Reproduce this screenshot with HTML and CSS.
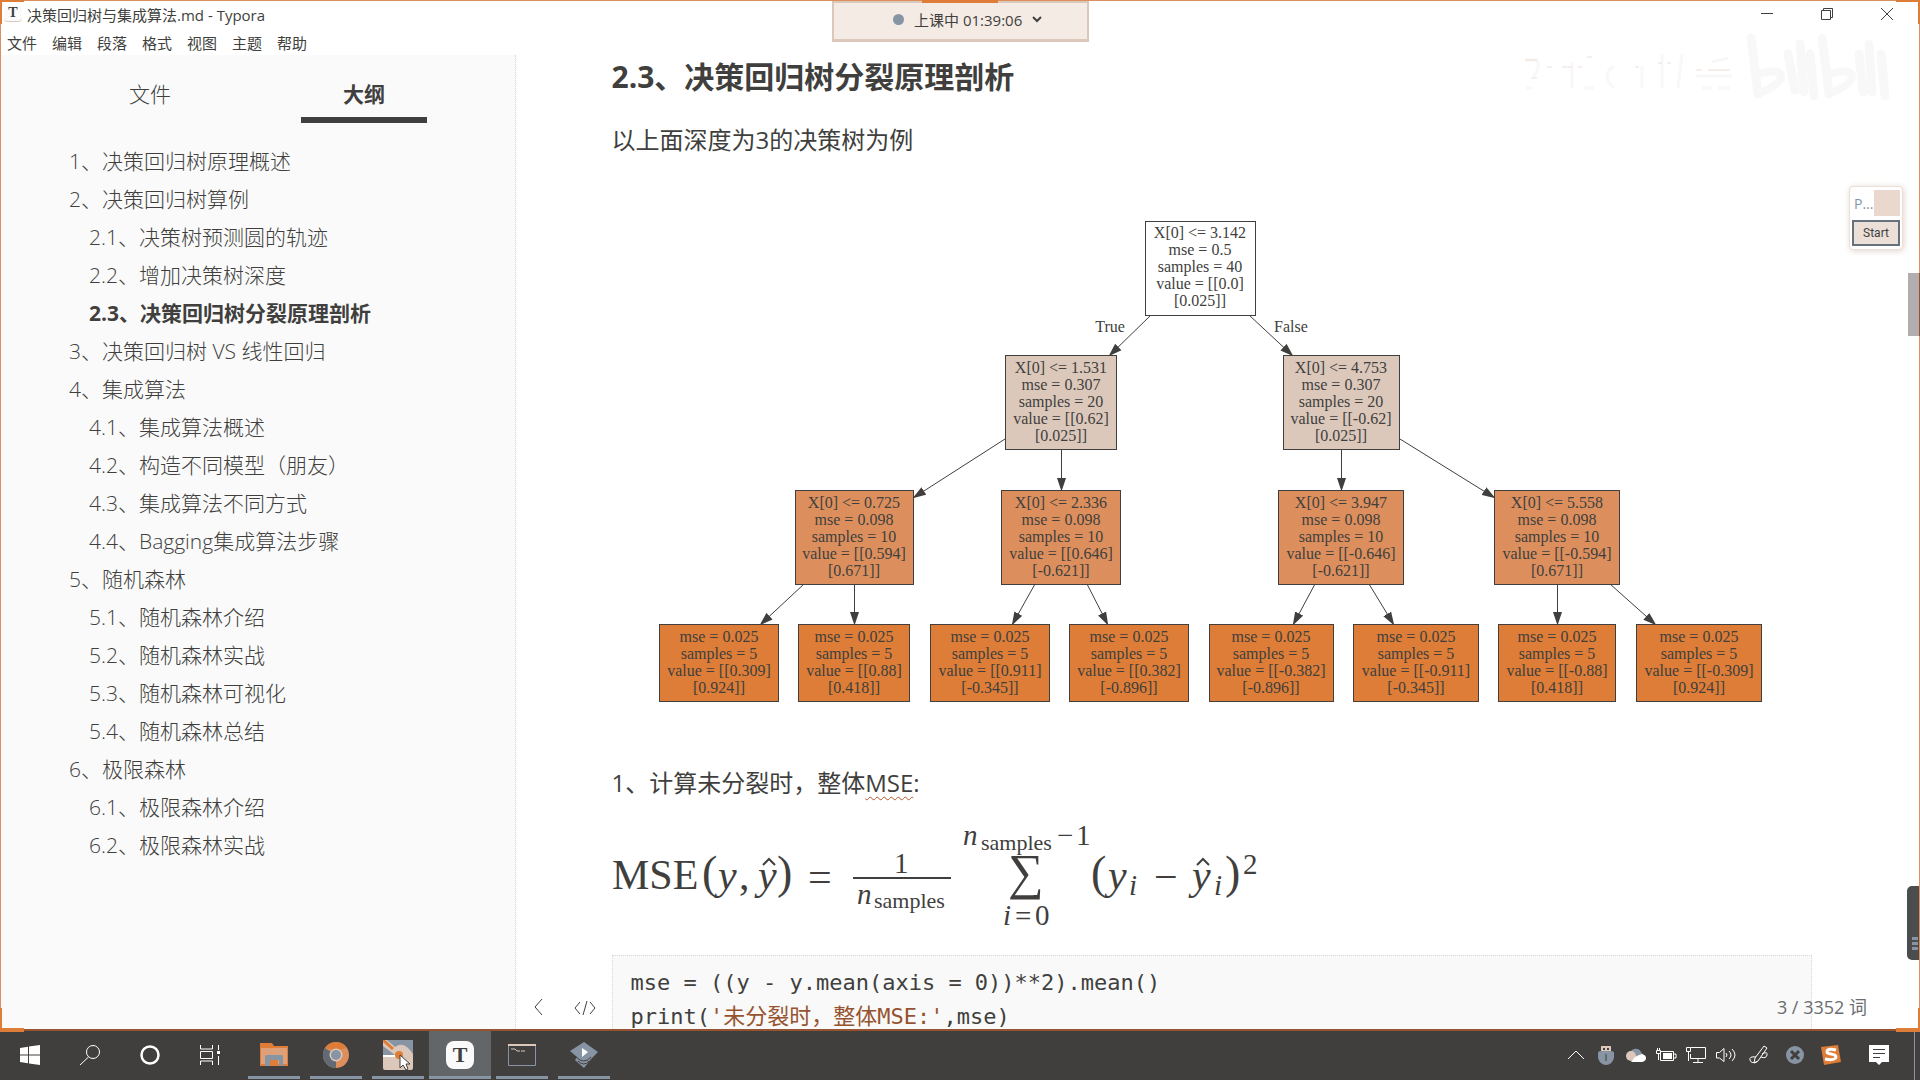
FILE: index.html
```html
<!DOCTYPE html>
<html lang="zh-CN">
<head>
<meta charset="utf-8">
<title>决策回归树与集成算法.md - Typora</title>
<link rel="stylesheet" href="styles.css">
</head>
<body>
<div class="window">
  <header class="titlebar">
    <span class="app-icon">T</span>
    <span class="title">决策回归树与集成算法.md - Typora</span>
    <div class="window-controls">
      <button type="button" aria-label="最小化"><svg width="14" height="14"><path d="M1 6.500h12" /></svg></button>
      <button type="button" aria-label="还原"><svg width="14" height="14"><path d="M1.500 3.500h9v9h-9zM3.500 3.500v-2h9v9h-2" /></svg></button>
      <button type="button" aria-label="关闭"><svg width="14" height="14"><path d="M1 1l12 12M13 1L1 13" /></svg></button>
    </div>
  </header>
  <nav class="menubar" aria-label="菜单">
    <button type="button">文件</button><button type="button">编辑</button><button type="button">段落</button><button type="button">格式</button><button type="button">视图</button><button type="button">主题</button><button type="button">帮助</button>
  </nav>
  <div class="workspace">
    <aside class="sidebar">
      <div class="tabs">
        <button type="button" class="tab">文件</button>
        <button type="button" class="tab active">大纲</button>
      </div>
      <nav class="outline" aria-label="大纲">
        <a href="#s1">1、决策回归树原理概述</a>
        <a href="#s2">2、决策回归树算例</a>
        <a href="#s21" class="sub">2.1、决策树预测圆的轨迹</a>
        <a href="#s22" class="sub">2.2、增加决策树深度</a>
        <a href="#s23" class="sub current">2.3、决策回归树分裂原理剖析</a>
        <a href="#s3">3、决策回归树 VS 线性回归</a>
        <a href="#s4">4、集成算法</a>
        <a href="#s41" class="sub">4.1、集成算法概述</a>
        <a href="#s42" class="sub">4.2、构造不同模型（朋友）</a>
        <a href="#s43" class="sub">4.3、集成算法不同方式</a>
        <a href="#s44" class="sub">4.4、Bagging集成算法步骤</a>
        <a href="#s5">5、随机森林</a>
        <a href="#s51" class="sub">5.1、随机森林介绍</a>
        <a href="#s52" class="sub">5.2、随机森林实战</a>
        <a href="#s53" class="sub">5.3、随机森林可视化</a>
        <a href="#s54" class="sub">5.4、随机森林总结</a>
        <a href="#s6">6、极限森林</a>
        <a href="#s61" class="sub">6.1、极限森林介绍</a>
        <a href="#s62" class="sub">6.2、极限森林实战</a>
      </nav>
    </aside>
    <main class="editor">
      <article class="document">
        <h3 id="s23">2.3、决策回归树分裂原理剖析</h3>
        <p>以上面深度为3的决策树为例</p>
        <svg class="tree" viewBox="612 209 1200 507" role="img" aria-label="决策树">
          <defs>
            <marker id="arrow" markerUnits="userSpaceOnUse" markerWidth="14" markerHeight="10" refX="13" refY="5" orient="auto"><path d="M0 0.500L13.500 5L0 9.500z" fill="#403f3d" /></marker>
          </defs>
          <g class="edges">
            <path d="M1151 315L1109 356" /><path d="M1249 315L1293 356" />
            <path d="M1005 439L913 498" /><path d="M1061.500 449V491" />
            <path d="M1341.500 449V491" /><path d="M1400 439L1495 498" />
            <path d="M804 584L760 625" /><path d="M854.500 584V625" />
            <path d="M1035 584L1012 625" /><path d="M1087 584L1108 625" />
            <path d="M1315 584L1293 625" /><path d="M1369 584L1394 625" />
            <path d="M1557.500 584V625" /><path d="M1610 584L1656 625" />
          </g>
          <g class="depth0">
            <rect x="1145.500" y="221.500" width="110" height="94" />
            <text y="238"><tspan x="1200">X[0] &lt;= 3.142</tspan><tspan x="1200" dy="17">mse = 0.5</tspan><tspan x="1200" dy="17">samples = 40</tspan><tspan x="1200" dy="17">value = [[0.0]</tspan><tspan x="1200" dy="17">[0.025]]</tspan></text>
            <text x="1110" y="332">True</text>
            <text x="1291" y="332">False</text>
          </g>
          <g class="depth1">
            <rect x="1005.500" y="355.500" width="111" height="94" />
            <text y="373"><tspan x="1061">X[0] &lt;= 1.531</tspan><tspan x="1061" dy="17">mse = 0.307</tspan><tspan x="1061" dy="17">samples = 20</tspan><tspan x="1061" dy="17">value = [[0.62]</tspan><tspan x="1061" dy="17">[0.025]]</tspan></text>
            <rect x="1283.500" y="355.500" width="116" height="94" />
            <text y="373"><tspan x="1341">X[0] &lt;= 4.753</tspan><tspan x="1341" dy="17">mse = 0.307</tspan><tspan x="1341" dy="17">samples = 20</tspan><tspan x="1341" dy="17">value = [[-0.62]</tspan><tspan x="1341" dy="17">[0.025]]</tspan></text>
          </g>
          <g class="depth2">
            <rect x="795.500" y="490.500" width="118" height="94" />
            <text y="508"><tspan x="854">X[0] &lt;= 0.725</tspan><tspan x="854" dy="17">mse = 0.098</tspan><tspan x="854" dy="17">samples = 10</tspan><tspan x="854" dy="17">value = [[0.594]</tspan><tspan x="854" dy="17">[0.671]]</tspan></text>
            <rect x="1001.500" y="490.500" width="119" height="94" />
            <text y="508"><tspan x="1061">X[0] &lt;= 2.336</tspan><tspan x="1061" dy="17">mse = 0.098</tspan><tspan x="1061" dy="17">samples = 10</tspan><tspan x="1061" dy="17">value = [[0.646]</tspan><tspan x="1061" dy="17">[-0.621]]</tspan></text>
            <rect x="1278.500" y="490.500" width="125" height="94" />
            <text y="508"><tspan x="1341">X[0] &lt;= 3.947</tspan><tspan x="1341" dy="17">mse = 0.098</tspan><tspan x="1341" dy="17">samples = 10</tspan><tspan x="1341" dy="17">value = [[-0.646]</tspan><tspan x="1341" dy="17">[-0.621]]</tspan></text>
            <rect x="1494.500" y="490.500" width="125" height="94" />
            <text y="508"><tspan x="1557">X[0] &lt;= 5.558</tspan><tspan x="1557" dy="17">mse = 0.098</tspan><tspan x="1557" dy="17">samples = 10</tspan><tspan x="1557" dy="17">value = [[-0.594]</tspan><tspan x="1557" dy="17">[0.671]]</tspan></text>
          </g>
          <g class="depth3">
            <rect x="659.500" y="624.500" width="119" height="77" />
            <text y="642"><tspan x="719">mse = 0.025</tspan><tspan x="719" dy="17">samples = 5</tspan><tspan x="719" dy="17">value = [[0.309]</tspan><tspan x="719" dy="17">[0.924]]</tspan></text>
            <rect x="798.500" y="624.500" width="111" height="77" />
            <text y="642"><tspan x="854">mse = 0.025</tspan><tspan x="854" dy="17">samples = 5</tspan><tspan x="854" dy="17">value = [[0.88]</tspan><tspan x="854" dy="17">[0.418]]</tspan></text>
            <rect x="930.500" y="624.500" width="119" height="77" />
            <text y="642"><tspan x="990">mse = 0.025</tspan><tspan x="990" dy="17">samples = 5</tspan><tspan x="990" dy="17">value = [[0.911]</tspan><tspan x="990" dy="17">[-0.345]]</tspan></text>
            <rect x="1069.500" y="624.500" width="119" height="77" />
            <text y="642"><tspan x="1129">mse = 0.025</tspan><tspan x="1129" dy="17">samples = 5</tspan><tspan x="1129" dy="17">value = [[0.382]</tspan><tspan x="1129" dy="17">[-0.896]]</tspan></text>
            <rect x="1209.500" y="624.500" width="124" height="77" />
            <text y="642"><tspan x="1271">mse = 0.025</tspan><tspan x="1271" dy="17">samples = 5</tspan><tspan x="1271" dy="17">value = [[-0.382]</tspan><tspan x="1271" dy="17">[-0.896]]</tspan></text>
            <rect x="1353.500" y="624.500" width="125" height="77" />
            <text y="642"><tspan x="1416">mse = 0.025</tspan><tspan x="1416" dy="17">samples = 5</tspan><tspan x="1416" dy="17">value = [[-0.911]</tspan><tspan x="1416" dy="17">[-0.345]]</tspan></text>
            <rect x="1498.500" y="624.500" width="117" height="77" />
            <text y="642"><tspan x="1557">mse = 0.025</tspan><tspan x="1557" dy="17">samples = 5</tspan><tspan x="1557" dy="17">value = [[-0.88]</tspan><tspan x="1557" dy="17">[0.418]]</tspan></text>
            <rect x="1636.500" y="624.500" width="125" height="77" />
            <text y="642"><tspan x="1699">mse = 0.025</tspan><tspan x="1699" dy="17">samples = 5</tspan><tspan x="1699" dy="17">value = [[-0.309]</tspan><tspan x="1699" dy="17">[0.924]]</tspan></text>
          </g>
        </svg>
        <p>1、计算未分裂时，整体<span class="misspelt">MSE</span>:</p>
        <svg class="formula" viewBox="612 812 1200 128" role="img" aria-label="均方误差公式">
          <g class="base">
            <text x="612" y="889">MSE</text>
            <text x="718" y="889" class="var">y</text><text x="739" y="889">,</text>
            <text x="758" y="889" class="var">y</text>
            <text x="808" y="891">=</text>
            <text x="1108" y="889" class="var">y</text>
            <text x="1154" y="891">−</text>
            <text x="1192" y="889" class="var">y</text>
          </g>
          <g class="paren">
            <text x="702" y="888">(</text><text x="777" y="888">)</text>
            <text x="1091" y="888">(</text><text x="1225" y="888">)</text>
          </g>
          <g class="script">
            <text x="894" y="873">1</text>
            <text x="857" y="904" class="var">n</text>
            <text x="963" y="845" class="var">n</text>
            <text x="1057" y="845">−</text><text x="1076" y="845">1</text>
            <text x="1003" y="925" class="var">i</text><text x="1015" y="926">=</text><text x="1035" y="925">0</text>
            <text x="1129" y="895" class="var">i</text><text x="1214" y="895" class="var">i</text>
            <text x="1243" y="874">2</text>
          </g>
          <g class="subscript">
            <text x="874" y="908">samples</text>
            <text x="981" y="850">samples</text>
          </g>
          <text x="1008" y="889" class="sum">∑</text>
          <path d="M853 878h98" class="bar" />
          <path d="M763 865l6-6 6 6M1197 865l6-6 6 6" class="hat" />
        </svg>
        <pre class="code"><code>mse = ((y - y.mean(axis = 0))**2).mean()
print(<span class="str">'未分裂时，整体MSE:'</span>,mse)</code></pre>
      </article>
      <footer class="statusbar">
        <button type="button" aria-label="收起侧栏"><svg width="12" height="18"><path d="M10 1L3 9l7 8" /></svg></button>
        <button type="button" aria-label="源代码模式"><svg width="22" height="18"><path d="M6 4L1 10l5 6M16 4l5 6-5 6M13 3l-4 14" /></svg></button>
        <span class="count">3 / 3352 词</span>
      </footer>
    </main>
  </div>

  <svg class="watermark" width="380" height="80" aria-hidden="true">
    <path class="wm-text" d="M3 28h12q4 8-4 17M4 56h6M50 30v26M62 56h10M92 34q-14 10 0 22M120 34v22M140 22v34M160 22l-4 34M174 44h36M180 56h10M196 56h12M190 30l16-4" />
    <path class="wm-line" d="M3 28h12M9 46h6M25 35h5M40 35h10M56 35h4M65 25h5M113 35h4M136 31h4M145 31h4M174 38h6M186 38h22" />
    <path class="wm-logo" d="M229 6l7 56M266 22l7 36M278 12l4 48M288 22l4 42M300 6l7 56M337 22l4 38M347 12l3 48M359 22l4 42" />
    <path class="wm-ring" d="M236 42q22-6 23 2t-23 18M307 42q22-6 23 2t-23 18" />
  </svg>
  <button type="button" class="class-timer"><span class="dot"></span><span>上课中 01:39:06</span><svg width="10" height="8"><path d="M1 2l4 4 4-4" /></svg></button>
  <section class="mini-panel">
    <div class="mini-head"><span>P...</span><i></i></div>
    <button type="button">Start</button>
  </section>
  <div class="scroll-thumb"></div>
  <div class="drag-handle"><i></i><i></i><i></i></div>
  <i class="corner tl"></i><i class="corner tr"></i><i class="corner bl"></i><i class="corner br"></i>
</div>

<footer class="taskbar">
  <div class="system">
    <button type="button" aria-label="开始"><svg width="20" height="20" fill="#fff"><path d="M0 3l8-1.200V9.500H0zM9 1.600L20 0v9.500H9zM0 10.500h8v7.700L0 17zM9 10.500h11V20L9 18.400z" /></svg></button>
    <button type="button" aria-label="搜索"><svg width="22" height="22" class="line"><circle cx="14" cy="8" r="6.500" /><path d="M9.500 13L1 21" /></svg></button>
    <button type="button" aria-label="Cortana"><svg width="22" height="22" class="line"><circle cx="11" cy="11" r="8.500" stroke-width="2.500" /></svg></button>
    <button type="button" aria-label="任务视图"><svg width="22" height="20" class="line"><path d="M1.500 0v4h12V0M1.500 20v-4h12v4M1.500 6.500h12v7h-12zM19.500 0v5M19.500 11v9" /><path d="M18 6h3v3h-3z" fill="#fff" stroke="none" /></svg></button>
  </div>
  <div class="apps">
    <button type="button" class="running" aria-label="文件资源管理器"><svg width="28" height="24"><path d="M0 0h12l2 3h14v20H0z" fill="#dd7d37" /><path d="M1 5h26v16H1z" fill="#dda078" /><path d="M5 23v-9q0-2 2-2h14q2 0 2 2v9h-4v-6h-9v6z" fill="#8794a3" /><path d="M10 17h8v5h-8z" fill="#dd7d37" /></svg></button>
    <button type="button" class="running" aria-label="Chrome"><svg width="28" height="28"><circle cx="14" cy="14" r="13" fill="#dc8f5d" /><path d="M14 14L3 7A13 13 0 0 0 14 27z" fill="#626b75" /><path d="M3 7A13 13 0 0 1 25 7L14 9z" fill="#dd7d37" /><circle cx="14" cy="14" r="6.500" fill="#dcc8bb" /><circle cx="14" cy="14" r="5" fill="#8794a3" /></svg></button>
    <button type="button" class="running" aria-label="画图"><svg width="30" height="30"><rect width="30" height="30" rx="2" fill="#dcc8bb" /><path d="M4 0h26v14q-9-14-18-7zM0 6l12 9H0z" fill="#8794a3" /><path d="M0 15h14v2H0z" fill="#fff" /><path d="M0 0l10 9" stroke="#dd7d37" stroke-width="3" /><circle cx="16" cy="15" r="4" fill="#dd7d37" /><path d="M17 15v13l3-3 3 5 2-1-2-5h4z" fill="#fff" stroke="#403f3d" /></svg></button>
    <button type="button" class="running focused" aria-label="Typora"><span class="typora">T</span></button>
    <button type="button" class="running" aria-label="命令提示符"><svg width="28" height="22"><path d="M.5.5h27v21H.5z" fill="#403f3d" stroke="#8794a3" /><path d="M0 1h28" stroke="#dcc8bb" stroke-width="2" /><path d="M3 5h4l2 2h3M13 7h4" stroke="#dcc8bb" fill="none" /></svg></button>
    <button type="button" class="running" aria-label="虚拟机"><svg width="28" height="26"><path d="M14 0l14 10-7 7-7 9-9-8 2-3-7-6z" fill="#8794a3" /><path d="M6 15q8 8 15 0M8 19q6 6 11 0" stroke="#403f3d" fill="none" /><path d="M12 6l6 4-6 5z" fill="#fff" /></svg></button>
  </div>
  <div class="tray">
    <button type="button" aria-label="显示隐藏的图标"><svg width="18" height="12" class="line"><path d="M1 10l8-8 8 8" /></svg></button>
    <button type="button" aria-label="USB"><svg width="16" height="20"><path d="M3 1h10v6H3z" fill="#dcc8bb" /><path d="M5 3h2v2H5zM9 3h2v2H9z" fill="#403f3d" /><path d="M0 8q0-2 3-2h10q3 0 3 2v5q-2 7-8 7t-8-7z" fill="#8794a3" /><path d="M8 9v7" stroke="#403f3d" /></svg></button>
    <button type="button" aria-label="OneDrive"><svg width="20" height="14"><path d="M4 5a6 6 0 0 1 11-1l3 4-10 4z" fill="#8794a3" /><circle cx="5" cy="8" r="5" fill="#dcc8bb" /><path d="M5 14l4-5 4-2 3-1q4 1 4 4t-4 4z" fill="#fff" /></svg></button>
    <button type="button" aria-label="电源"><svg width="22" height="16" class="line"><path d="M5.500 4.500h13v9h-13zM19 7h2v4h-2M1.500 3.500h4v3h-4zM2.500 1v2M4.500 1v2M3.500 7v6" /><path d="M8 6h9v6H8z" fill="#fff" stroke="none" /></svg></button>
    <button type="button" aria-label="网络"><svg width="20" height="18" class="line"><path d="M5 1.500h14.500v11H4.500V8M.5 1.500h4v4h-4zM2.500 6v9M12 13v3M7 16.500h10" /></svg></button>
    <button type="button" aria-label="音量"><svg width="22" height="16" class="line"><path d="M1.500 5.500h3L9 1.500v13L4.500 11h-3z" /><path d="M11 6q2 2 0 4M14 4q4 4 0 8M17 2q6 6 0 12" /></svg></button>
    <button type="button" class="wide" aria-label="手写笔"><svg width="22" height="20" class="line"><path d="M16 1l3 2-9 13-4 2 1-5zM8 12q-7-1-6 3t7 2M14 9q6-3 5 1t-6 2" /></svg></button>
    <button type="button" class="wide" aria-label="已断开"><svg width="18" height="18"><circle cx="9" cy="9" r="9" fill="#8794a3" /><path d="M5 5l8 8M13 5l-8 8" stroke="#403f3d" stroke-width="3" /></svg></button>
    <button type="button" class="wide" aria-label="搜狗输入法"><svg width="20" height="20"><path d="M0 2l17-2 3 17-17 3z" fill="#dd7d37" /><path d="M15 5q-9-2-9 2c0 3 9 1 9 5q-1 4-11 2" stroke="#fff" stroke-width="3" fill="none" /></svg></button>
    <button type="button" class="notice" aria-label="通知"><svg width="20" height="20"><path d="M0 0h20v17h-7l-3 3-3-3H0z" fill="#fff" /><path d="M4 4.500h12M4 8.500h12M4 12.500h7" stroke="#403f3d" /></svg></button>
  </div>
</footer>
</body>
</html>
```
FILE: styles.css
```css
* { box-sizing: border-box; }

body {
  margin: 0;
  height: 100vh;
  display: flex;
  flex-direction: column;
  overflow: hidden;
  font-family: "Open Sans", "Noto Sans CJK SC", sans-serif;
  color: #403f3d;
  background: #fff;
}

button {
  border: 0;
  padding: 0;
  background: none;
  color: inherit;
  font: inherit;
}

svg { display: block; }

/* Application window */
.window {
  position: relative;
  flex: 1;
  min-height: 0;
  display: flex;
  flex-direction: column;
  border: 1px solid #dc8f5d;
  border-bottom: 2px solid #96532f;
}

.titlebar {
  display: flex;
  align-items: center;
  height: 30px;
  padding: 0 0 4px 3px;
  font-size: 15px;
}

.app-icon {
  width: 18px;
  height: 16px;
  margin-right: 5px;
  border-bottom: 1px solid #dcc8bb;
  border-radius: 4px;
  background: #fafafa;
  font: bold 14px/14px "Liberation Serif", serif;
  text-align: center;
}

.window-controls {
  display: flex;
  margin-left: auto;
  padding-right: 2px;
}

.window-controls button {
  width: 60px;
  display: flex;
  justify-content: center;
}

.window-controls path,
.statusbar path,
.class-timer path {
  fill: none;
  stroke: #403f3d;
}

.menubar {
  display: flex;
  gap: 15px;
  height: 24px;
  padding-left: 6px;
  font-size: 15px;
  line-height: 24px;
}

.workspace {
  flex: 1;
  min-height: 0;
  display: grid;
  grid-template-columns: 515px 1fr;
}

/* Outline */
.sidebar {
  background: #fafafa;
  border-right: 1px dotted #dcd6d2;
  font-size: 21px;
  overflow: hidden;
}

.tabs {
  display: flex;
  justify-content: center;
  gap: 88px;
  padding: 10px 2px 0 0;
}

.tab {
  width: 126px;
  height: 58px;
  padding-top: 3px;
  border-bottom: 6px solid transparent;
  font-weight: 300;
}

.tab.active {
  border-color: #403f3d;
  font-weight: 700;
}

.outline {
  display: flex;
  flex-direction: column;
  padding: 19px 0 0 68px;
  line-height: 38px;
  font-weight: 300;
}

.outline a {
  color: inherit;
  text-decoration: none;
}

.outline .sub { padding-left: 20px; }
.outline .current { font-weight: 700; }

/* Document */
.editor {
  position: relative;
  overflow: hidden;
  padding-right: 12px;
}

.document {
  max-width: 1200px;
  margin: 0 auto;
}

h3 {
  margin: 0 0 21px;
  font-size: 30px;
  line-height: 44px;
}

p {
  margin: 0;
  font-size: 24px;
  line-height: 40px;
}

.misspelt {
  text-decoration: underline wavy #b5562a 1px;
  text-underline-offset: 4px;
}

.tree {
  width: 100%;
  margin: 49px 0 47px;
}

.tree text {
  font: 16px "Liberation Serif", serif;
  text-anchor: middle;
  fill: #403f3d;
}

.tree rect { stroke: #403f3d; }
.edges path {
  stroke: #403f3d;
  fill: none;
  marker-end: url(#arrow);
}
.depth0 rect { fill: #fff; }
.depth1 rect { fill: #dcc8bb; }
.depth2 rect { fill: #dc8f5d; }
.depth3 rect { fill: #dd7d37; }

.formula {
  width: 100%;
  margin-top: 9px;
  fill: #403f3d;
  font-family: "Liberation Serif", serif;
}

.base { font-size: 42px; }
.sum { font-size: 50px; }
.paren { font-size: 46px; }
.script { font-size: 29px; }
.subscript { font-size: 22px; }
.var { font-style: italic; }
.bar { stroke: #403f3d; stroke-width: 2; }
.hat { stroke: #403f3d; stroke-width: 2; fill: none; }

.code {
  margin: 15px 0 0;
  padding: 10px 18px;
  border: 1px dotted #dcd6d2;
  background: #f9f9f9;
  font: 22px/34px "DejaVu Sans Mono", "Noto Sans CJK SC", monospace;
}

.code code { font: inherit; }
.str { color: #96532f; }

.statusbar {
  position: absolute;
  inset: auto 52px 9px 16px;
  display: flex;
  align-items: center;
  gap: 30px;
  font-size: 18px;
  line-height: 26px;
  color: #6b6d70;
}

.count { margin-left: auto; }

/* Overlays */
.watermark {
  position: absolute;
  top: 31px;
  right: 17px;
  fill: none;
}

.wm-text { stroke: #f8f8f8; stroke-width: 3; }
.wm-line { stroke: #ecdfd7; }
.wm-logo { stroke: #f8f8f8; stroke-width: 9; stroke-linecap: round; }
.wm-ring { stroke: #f8f8f8; stroke-width: 8; }

.class-timer {
  position: absolute;
  top: 0;
  left: calc(50% - 128px);
  width: 257px;
  height: 41px;
  display: flex;
  align-items: center;
  padding: 0 0 4px 59px;
  gap: 10px;
  border: 2px solid #dcc8bb;
  border-bottom-width: 3px;
  background: #f4ebe5;
  font-size: 15px;
}

.dot {
  width: 11px;
  height: 11px;
  border-radius: 50%;
  background: #8794a3;
}

.class-timer::before {
  content: "";
  position: absolute;
  top: -3px;
  left: 88px;
  width: 76px;
  height: 3px;
  background: #dd7d37;
}

.class-timer path { stroke-width: 2; }

.mini-panel {
  position: absolute;
  top: 185px;
  right: 16px;
  width: 54px;
  padding: 3px 2px;
  border: 1px solid #ecdfd7;
  border-radius: 4px;
  background: #fff;
  box-shadow: 1px 1px 6px #e0d4cc;
}

.mini-head {
  display: flex;
  justify-content: space-between;
  align-items: center;
  padding-left: 2px;
  font-size: 14px;
  color: #8794a3;
}

.mini-head i {
  width: 26px;
  height: 26px;
  background: #ead8ce;
}

.mini-panel button {
  width: 100%;
  height: 26px;
  margin-top: 4px;
  border: 2px solid #66717d;
  background: #ebdfd7;
  font: 12px "Roboto", sans-serif;
}

.scroll-thumb {
  position: absolute;
  top: 272px;
  right: -1px;
  width: 12px;
  height: 63px;
  background: #b2aeaf;
  border-right: 1px solid #96532f;
}

.drag-handle {
  position: absolute;
  top: 885px;
  right: 0;
  width: 12px;
  height: 74px;
  padding: 51px 1px 0 5px;
  display: flex;
  flex-direction: column;
  gap: 2px;
  border-radius: 5px 0 0 5px;
  background: #4b4c4e;
}

.drag-handle i {
  height: 3px;
  background: #8794a3;
}

.corner {
  position: absolute;
  width: 24px;
  height: 24px;
  border: 0 solid #dd7d37;
}

.tl { top: -1px; left: -1px; border-width: 2px 0 0 2px; }
.tr { top: -1px; right: -1px; border-width: 2px 2px 0 0; }
.bl { bottom: -3px; left: -1px; border-width: 0 0 4px 2px; }
.br { bottom: -3px; right: -1px; border-width: 0 2px 4px 0; }

/* Taskbar */
.taskbar {
  display: flex;
  height: 49px;
  padding-right: 5px;
  background: #403f3d;
  color: #fff;
}

.taskbar button {
  display: flex;
  align-items: center;
  justify-content: center;
  height: 48px;
}

.system, .apps, .tray { display: flex; }
.system button { width: 60px; }
.apps { margin-left: 3px; }

.apps button {
  position: relative;
  width: 62px;
}

.running::after {
  content: "";
  position: absolute;
  inset: auto 5px 0;
  height: 3px;
  background: #8794a3;
}

.focused { background: #626669; }
.focused::after { inset: auto 0 0; }

.typora {
  width: 28px;
  height: 28px;
  border-radius: 8px;
  background: #fafafa;
  color: #403f3d;
  font: bold 22px/28px "Liberation Serif", serif;
}

.tray {
  margin-left: auto;
  padding-right: 5px;
  border-right: 1px solid #8794a3;
}

.tray button { width: 30px; }
.tray .wide { width: 36px; }
.tray .notice { width: 60px; }

.line {
  fill: none;
  stroke: #fff;
}
```
